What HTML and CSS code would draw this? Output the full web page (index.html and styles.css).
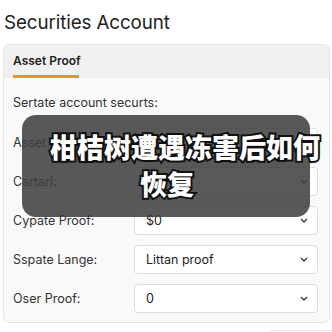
FILE: index.html
```html
<!DOCTYPE html>
<html>
<head>
<meta charset="utf-8">
<link rel="stylesheet" href="styles.css">
</head>
<body>
<h1 class="title">Securities Account</h1>
<div class="card">
  <div class="tabs"><div class="tab">Asset Proof</div></div>
  <div class="card-body">
    <p class="intro">Sertate account securts:</p>
    <div class="form">
      <label class="label">Asset Proof:</label>
      <div class="select"><span></span><svg class="chev" viewBox="0 0 8 5"><path d="M1 1l3 3 3-3" /></svg></div>
      <label class="label">Cartarl:</label>
      <div class="select"><span></span><svg class="chev" viewBox="0 0 8 5"><path d="M1 1l3 3 3-3" /></svg></div>
      <label class="label">Cypate Proof:</label>
      <div class="select"><span>$0</span><svg class="chev" viewBox="0 0 8 5"><path d="M1 1l3 3 3-3" /></svg></div>
      <label class="label">Sspate Lange:</label>
      <div class="select"><span>Littan proof</span><svg class="chev" viewBox="0 0 8 5"><path d="M1 1l3 3 3-3" /></svg></div>
      <label class="label">Oser Proof:</label>
      <div class="select"><span>0</span><svg class="chev" viewBox="0 0 8 5"><path d="M1 1l3 3 3-3" /></svg></div>
    </div>
  </div>
</div>
<div class="button-edge"></div>
<div class="caption">
  <div class="line1">柑桔树遭遇冻害后如何</div>
  <div class="line2">恢复</div>
</div>
</body>
</html>
```
FILE: styles.css
```css
html, body {
  margin: 0;
  padding: 0;
  background: #ffffff;
  width: 332px;
  height: 332px;
  overflow: hidden;
  position: relative;
  font-family: Inter, "Noto Sans", sans-serif;
  color: #2a2a2a;
}
.title {
  margin: 0;
  padding: 11px 0 0 4px;
  height: 44px;
  box-sizing: border-box;
  font-size: 18.8px;
  font-weight: 400;
  line-height: 24px;
  color: #222;
  letter-spacing: -0.1px;
}
.card {
  margin-left: 3px;
  width: 327px;
  height: 279px;
  box-sizing: border-box;
  border: 1px solid #e4e4e4;
  border-radius: 6px;
  background: #f9f9f9;
  overflow: hidden;
}
.tabs {
  height: 33px;
  background: #f0f0f0;
  padding-left: 9px;
  display: flex;
}
.tab {
  font-size: 12px;
  font-weight: 600;
  color: #222;
  line-height: 30px;
  height: 33px;
  box-sizing: border-box;
  border-bottom: 3px solid #f0921e;
  padding: 1px 0 0 0;
  width: 66px;
  white-space: nowrap;
}
.card-body {
  padding: 16px 11px 0 9px;
}
.intro {
  margin: 0 0 16px 0;
  font-size: 12.5px;
  line-height: 18px;
  color: #333;
}
.form {
  display: grid;
  grid-template-columns: 121px 1fr;
  grid-auto-rows: 29px;
  row-gap: 10px;
  align-items: center;
}
.label {
  font-size: 12.5px;
  color: #333;
}
.select {
  height: 29px;
  box-sizing: border-box;
  border: 1px solid #dcdcdc;
  border-radius: 4px;
  background: #fff;
  display: flex;
  align-items: center;
  justify-content: space-between;
  padding: 0 9px 0 11px;
  font-size: 12.5px;
  color: #222;
}
.chev {
  width: 8px;
  height: 5px;
  fill: none;
  stroke: #333;
  stroke-width: 1.3;
}
.button-edge {
  position: absolute;
  left: 270px;
  top: 330px;
  width: 62px;
  height: 4px;
  border-top: 1px solid #e6e6e6;
}
.caption {
  position: absolute;
  left: 22px;
  top: 115px;
  width: 288px;
  height: 102px;
  border-radius: 14px;
  background: rgba(62, 62, 62, 0.86);
  font-family: "Noto Sans CJK SC", sans-serif;
  font-weight: 900;
  font-size: 27px;
  color: #fff;
  -webkit-text-stroke: 4px #111;
  paint-order: stroke fill;
  white-space: nowrap;
}
.line1 {
  position: absolute;
  left: 28px;
  top: 14px;
  line-height: 36px;
}
.line2 {
  position: absolute;
  left: 118px;
  top: 51px;
  line-height: 36px;
}
```
